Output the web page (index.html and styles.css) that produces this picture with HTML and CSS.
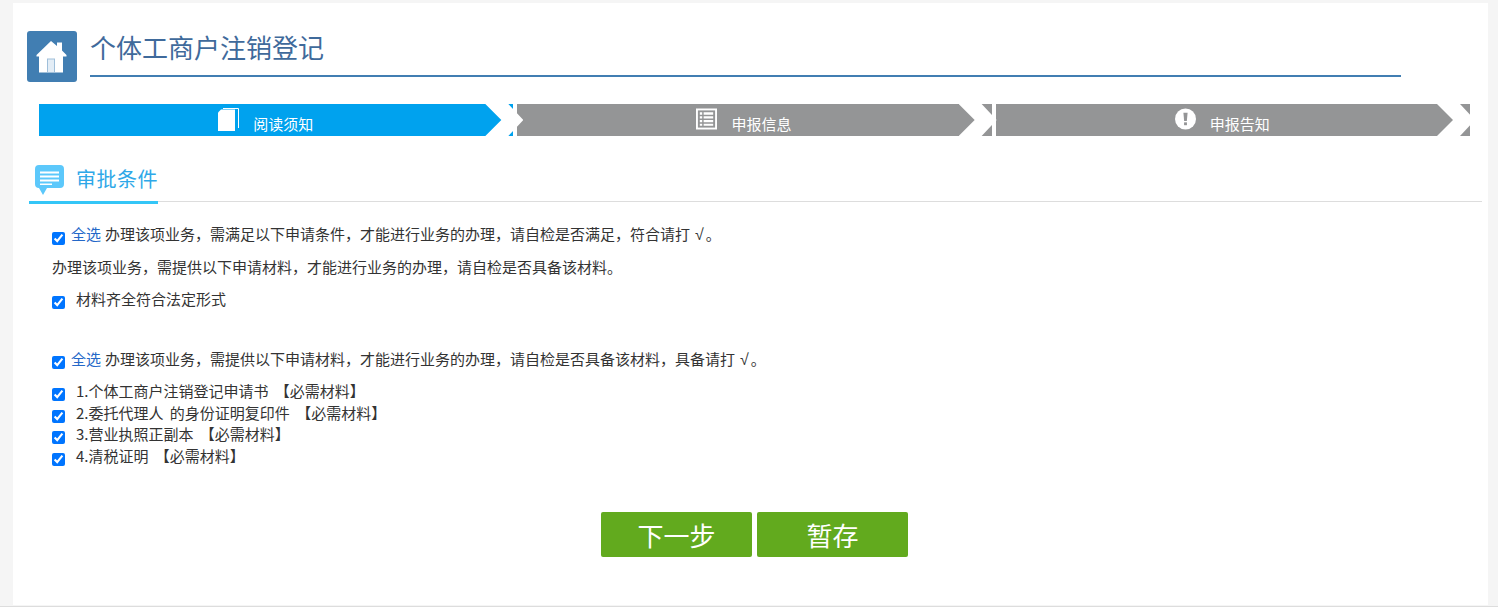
FILE: index.html
```html
<!DOCTYPE html>
<html lang="zh-CN">
<head>
  <meta charset="UTF-8" />
  <title>个体工商户注销登记</title>
  <link rel="stylesheet" href="styles.css">
</head>
<body>
  <div class="panel">

    <!-- page title -->
    <div class="page-head">
      <div class="home-icon">
        <svg width="32" height="34" viewBox="0 0 32 34">
          <path fill="#fff" d="M15 1 L21 6 V2.500 H26 V10.500 L30.500 15 V16.500 H27 V32.500 H3 V16.500 H.5 V15 Z"/>
          <rect x="11.500" y="19" width="7" height="13.500" fill="#e3edf6" stroke="#9fbfda" stroke-width="1"/>
        </svg>
      </div>
      <h1 class="page-title">个体工商户注销登记</h1>
    </div>

    <!-- steps -->
    <div class="steps">
      <div class="step active">
        <svg class="step-icon" width="21" height="23" viewBox="0 0 21 23">
          <path fill="#fff" d="M3 1.500 H17 V23 H0 V4.500 Z"/>
          <path fill="none" stroke="#fff" stroke-width="1" d="M5 .5 H20.500 V20"/>
        </svg>
        <span>阅读须知</span>
      </div>
      <div class="step">
        <svg class="step-icon" width="21" height="22" viewBox="0 0 22 22">
          <rect x="1" y="1" width="20" height="20" fill="none" stroke="#fff" stroke-width="2"/>
          <path fill="#fff" d="M4 4 H6.500 V6.500 H4 Z M8 4 H18 V6.500 H8 Z M4 8 H6.500 V10.500 H4 Z M8 8 H18 V10.500 H8 Z M4 12 H6.500 V14.500 H4 Z M8 12 H18 V14.500 H8 Z M4 16 H6.500 V18 H4 Z M8 16 H18 V18 H8 Z"/>
        </svg>
        <span>申报信息</span>
      </div>
      <div class="step">
        <svg class="step-icon" width="21" height="22" viewBox="0 0 22 22">
          <circle cx="11" cy="11" r="11" fill="#fff"/>
          <path fill="#949596" d="M8.800 4.500 H13.200 L12.400 13 H9.600 Z"/>
          <rect x="9.500" y="14.500" width="3" height="3" fill="#949596"/>
        </svg>
        <span>申报告知</span>
      </div>
    </div>

    <!-- section heading -->
    <div class="section-head">
      <div class="section-tab">
        <svg width="32" height="32" viewBox="0 0 32 32">
          <path fill="#5cc8fb" d="M6 1 H27 Q31 1 31 5 V20 Q31 24 27 24 H14 L10 31 L6 24 Q2 24 2 20 V5 Q2 1 6 1 Z"/>
          <path fill="#fff" d="M7 7.500 H26 V9.500 H7 Z M7 11.500 H26 V13.500 H7 Z M7 15.500 H26 V17.500 H7 Z M7 19.500 H19 V21 H7 Z"/>
        </svg>
        <span>审批条件</span>
      </div>
    </div>

    <div class="content">
      <div class="row row-first">
        <input type="checkbox" checked>
        <a class="select-all">全选</a>
        <span>办理该项业务，需满足以下申请条件，才能进行业务的办理，请自检是否满足，符合请打<span class="tick">√</span>。</span>
      </div>
      <p class="note">办理该项业务，需提供以下申请材料，才能进行业务的办理，请自检是否具备该材料。</p>
      <div class="row row-item">
        <input type="checkbox" checked>
        <span class="label">材料齐全符合法定形式</span>
      </div>

      <div class="row row-second">
        <input type="checkbox" checked>
        <a class="select-all">全选</a>
        <span>办理该项业务，需提供以下申请材料，才能进行业务的办理，请自检是否具备该材料，具备请打<span class="tick">√</span>。</span>
      </div>
      <ul class="material-list">
        <li class="row"><input type="checkbox" checked><span class="label">1.个体工商户注销登记申请书 【必需材料】</span></li>
        <li class="row"><input type="checkbox" checked><span class="label">2.委托代理人 的身份证明复印件 【必需材料】</span></li>
        <li class="row"><input type="checkbox" checked><span class="label">3.营业执照正副本 【必需材料】</span></li>
        <li class="row"><input type="checkbox" checked><span class="label">4.清税证明 【必需材料】</span></li>
      </ul>
    </div>

    <div class="actions">
      <button class="green-btn">下一步</button>
      <button class="green-btn">暂存</button>
    </div>

  </div>
</body>
</html>
```

FILE: styles.css
```css
html, body {
  height: 100%;
}

body {
  margin: 0;
  padding: 3px 10px 1px 13px;
  box-sizing: border-box;
  background-color: #f5f5f5;
  border-bottom: 1px solid #ddd;
  font-family: "Noto Sans CJK SC", "Liberation Sans", sans-serif;
  font-size: 15px;
  color: #333;
  overflow: hidden;
}

.panel {
  background-color: #fff;
  height: 100%;
  padding: 28px 6px 0 14px;
  box-sizing: border-box;
}

/* title */
.page-head {
  display: flex;
  height: 51px;
}

.home-icon {
  width: 50px;
  height: 51px;
  background-color: #417eb2;
  border-radius: 3px;
  display: flex;
  align-items: center;
  justify-content: center;
  flex-shrink: 0;
}

.page-title {
  margin: 0 0 0 13px;
  width: 1311px;
  height: 44px;
  border-bottom: 2px solid #417eb2;
  font-size: 26px;
  font-weight: normal;
  line-height: 32px;
  color: #3f6a9b;
}

/* steps */
.steps {
  display: grid;
  grid-template-columns: repeat(3, 1fr);
  gap: 4px;
  width: 1431px;
  margin: 22px 0 0 12px;
}

.step {
  position: relative;
  height: 32px;
  padding-right: 21px;
  background-color: #949596;
  color: #fff;
  display: flex;
  align-items: flex-start;
  justify-content: center;
}

.step.active {
  background-color: #00a2ee;
}

/* white chevron between the steps */
.step::after {
  content: "";
  position: absolute;
  z-index: 1;
  top: 0;
  right: -5px;
  width: 38px;
  height: 32px;
  background-color: #fff;
  clip-path: polygon(0 0, 23px 0, 38px 50%, 23px 100%, 0 100%, 16px 50%);
}

.step:first-child::after {
  right: -10px;
}

.step-icon {
  margin-top: 4px;
  margin-right: 14px;
}

.step span {
  line-height: 20px;
  margin-top: 10px;
  height: 22px;
  overflow: hidden;
}

/* section heading */
.section-head {
  margin: 28px 0 0 2px;
  border-bottom: 1px solid #ddd;
  height: 37px;
}

.section-tab {
  display: inline-flex;
  height: 37px;
  padding-left: 4px;
  border-bottom: 3px solid #34c6f7;
  margin-bottom: -2px;
  font-size: 20px;
  letter-spacing: .5px;
  line-height: 29px;
  color: #2ea8e8;
}

.section-tab svg {
  margin-right: 11px;
}

/* checklist */
.content {
  padding: 22px 0 0 25px;
  line-height: 20px;
}

.row {
  display: flex;
  align-items: flex-start;
}

.row input {
  width: 13px;
  height: 13px;
  margin: 7px 6px 0 0;
  flex-shrink: 0;
}

.row-first input {
  margin-top: 8px;
}

.select-all {
  color: #2468c8;
  margin-right: 4px;
}

.tick {
  font-family: "Liberation Sans", sans-serif;
  font-size: 16px;
  line-height: 0;
  padding: 0 2px 0 5px;
}

.label {
  margin-left: 5px;
  word-spacing: 3px;
}

.note {
  margin: 12px 0 0;
}

.row-item {
  margin-top: 12px;
}

.row-second {
  margin-top: 40px;
}

.material-list {
  list-style: none;
  margin: 12px 0 0;
  padding: 0;
}

.material-list .row {
  height: 21.670px;
}

/* buttons */
.actions {
  display: flex;
  justify-content: center;
  gap: 5px;
  margin: 44px 0 0 0;
}

.green-btn {
  width: 151px;
  height: 45px;
  border: none;
  border-radius: 2px;
  background-color: #62aa1e;
  color: #fff;
  font-family: inherit;
  font-size: 26px;
  line-height: 45px;
  padding: 0;
}
```
